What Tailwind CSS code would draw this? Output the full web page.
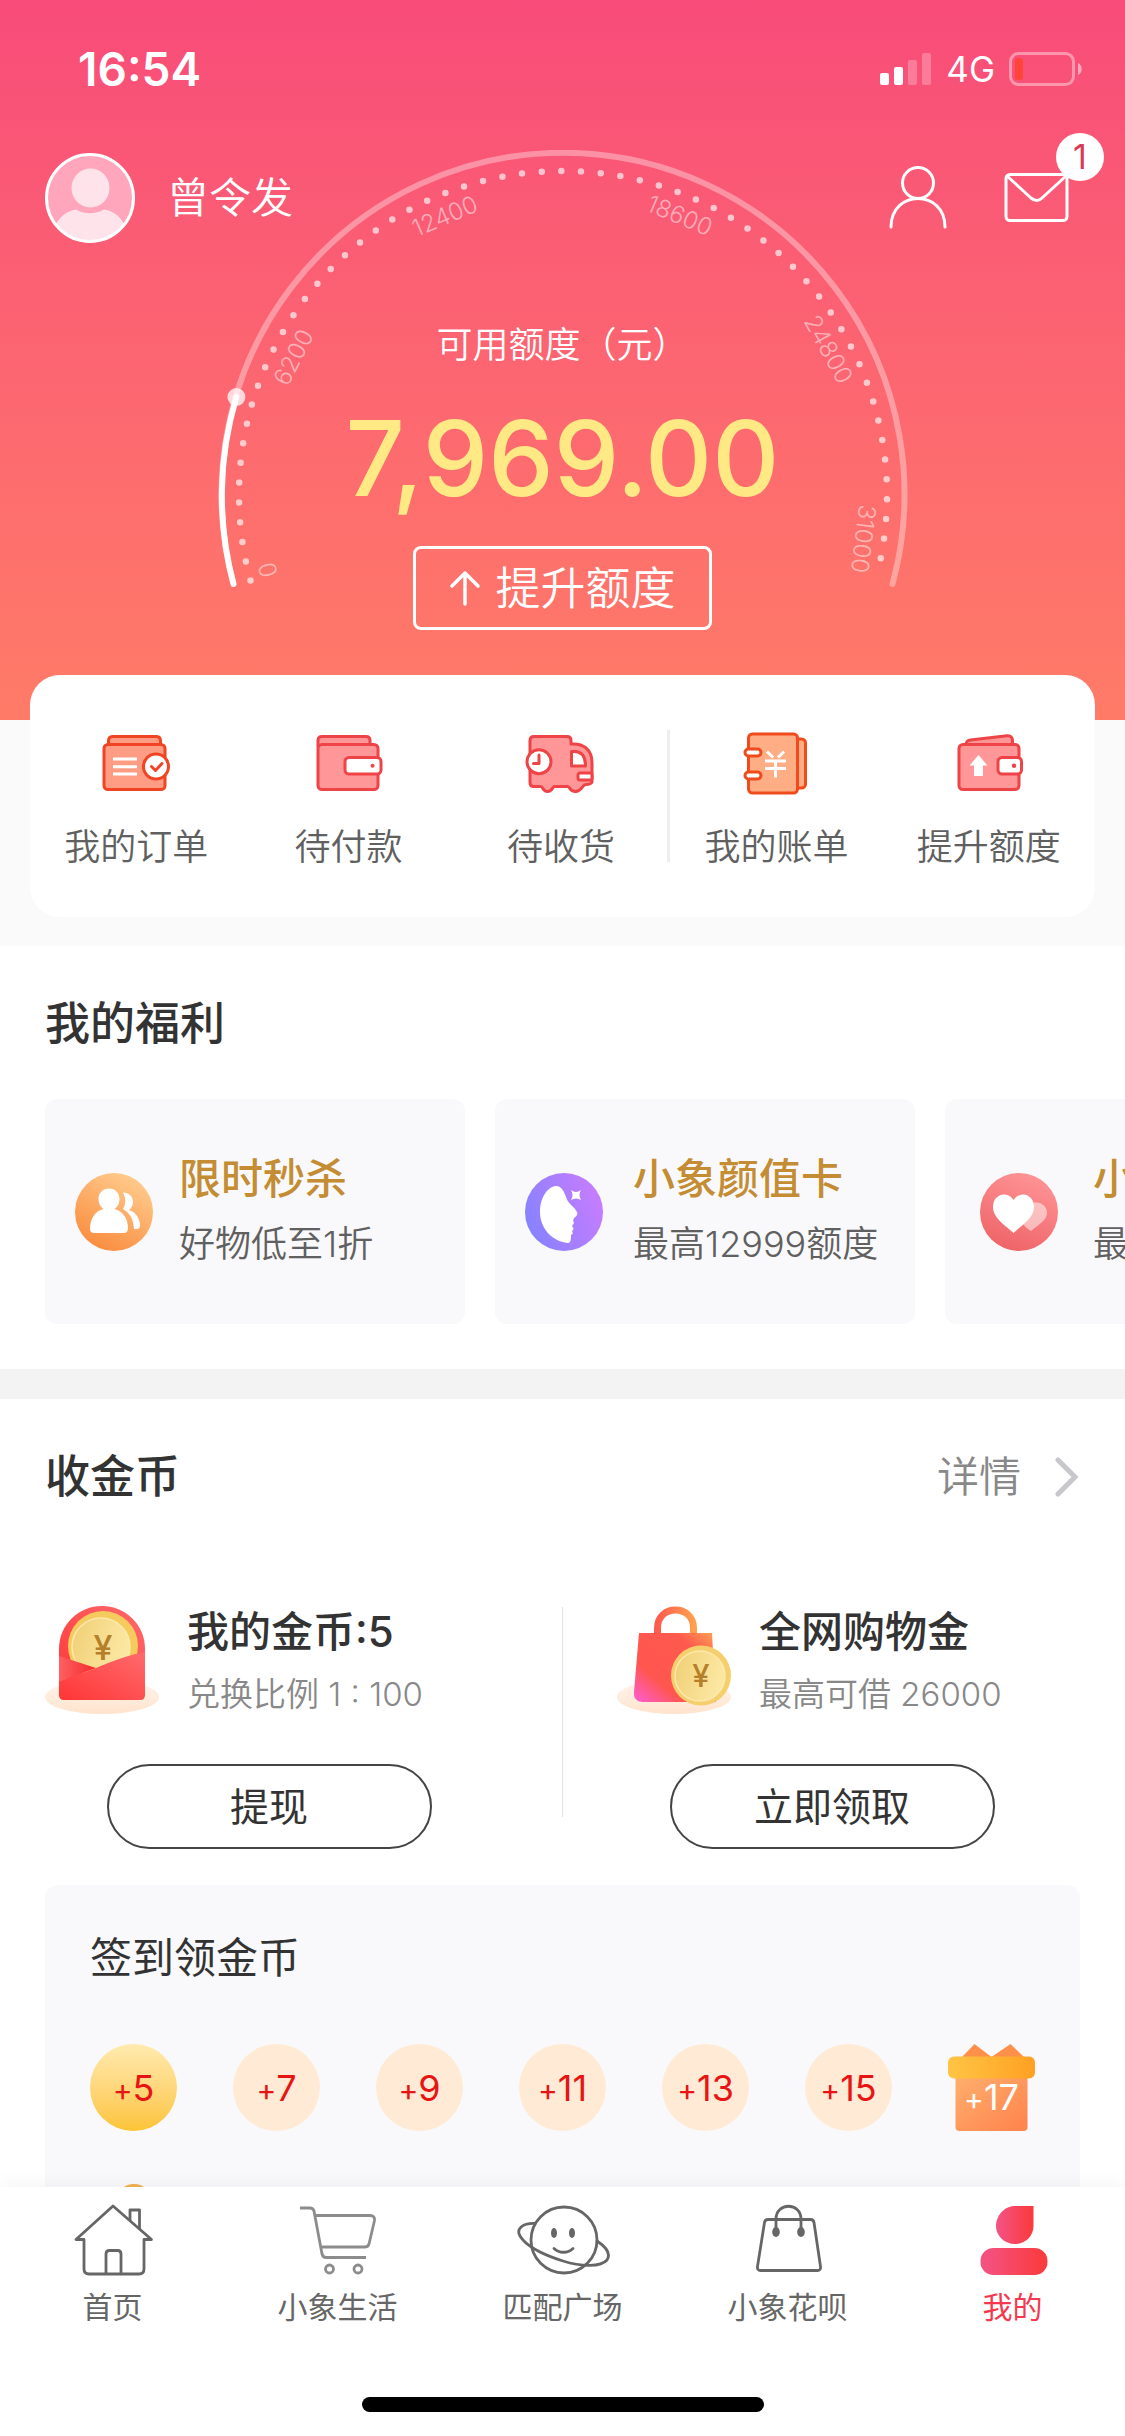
<!DOCTYPE html>
<html lang="zh-CN">
<head>
<meta charset="utf-8">
<meta name="viewport" content="width=device-width, initial-scale=1">
<title>我的</title>
<script src="https://cdn.jsdelivr.net/npm/@tailwindcss/browser@4"></script>
</head>
<body class="flex h-screen flex-col overflow-hidden bg-white font-['Inter','Noto_Sans_CJK_SC',sans-serif] text-[#333]">

<main class="min-h-0 flex-1 overflow-x-hidden overflow-y-auto [scrollbar-width:none]">

  <!-- Header with credit gauge -->
  <header class="bg-linear-to-b from-[#f84b79] to-[#ff7b67] pb-[90px] text-white">
    <div class="flex h-[138px] items-center justify-between pr-[42px] pl-[78px]">
      <span class="text-[46px] leading-none font-semibold">16:54</span>
      <div class="flex items-center gap-[14px]">
        <svg class="h-[34px] w-[52px]" viewBox="0 0 52 34" fill="#fff" aria-hidden="true">
          <rect x="0" y="21" width="9" height="12" rx="2"/><rect x="14" y="15" width="9" height="18" rx="2"/>
          <rect x="28" y="8" width="9" height="25" rx="2" opacity=".25"/><rect x="42" y="1" width="9" height="32" rx="2" opacity=".25"/>
        </svg>
        <span class="text-[35px] leading-none">4G</span>
        <svg class="h-[34px] w-[74px]" viewBox="0 0 74 34" aria-hidden="true">
          <rect x="1.500" y="1.500" width="63" height="31" rx="8" fill="none" stroke="#fff" stroke-opacity=".4" stroke-width="3"/>
          <rect x="6" y="6" width="8" height="22" rx="3" fill="#ff4539"/>
          <path d="M69 11c5 2 5 10 0 12z" fill="#fff" fill-opacity=".5"/>
        </svg>
      </div>
    </div>

    <div class="relative z-10 mt-[15px] flex h-[90px] items-center justify-between pr-[56px] pl-[45px]">
      <div class="flex items-center gap-[32px]">
        <svg class="size-[90px]" viewBox="0 0 90 90" role="img" aria-label="头像">
          <defs><clipPath id="avatar"><circle cx="45" cy="45" r="43"/></clipPath></defs>
          <circle cx="45" cy="45" r="43" fill="#ffa6bd"/>
          <g clip-path="url(#avatar)" fill="#fee4ea"><ellipse cx="45.500" cy="35" rx="19" ry="19.500"/><path d="M9 76C13 64 22 58 31 56.500c9 5 19 5 28 0C69 58 77 64 81 76v14H9z"/></g>
          <circle cx="45" cy="45" r="43.500" fill="none" stroke="#fff" stroke-width="3"/>
        </svg>
        <span class="text-[42px] leading-none font-[350]">曾令发</span>
      </div>
      <div class="flex items-center gap-[55px]">
        <a href="#profile" aria-label="个人资料">
          <svg class="h-[66px] w-[60px]" viewBox="0 0 60 66" fill="none" stroke="#fff" stroke-width="3" stroke-linecap="round"><circle cx="30" cy="18" r="15.500"/><path d="M3 62C3 24 57 24 57 62"/></svg>
        </a>
        <a href="#messages" aria-label="消息" class="relative">
          <svg class="h-[54px] w-[66px]" viewBox="0 0 66 54" fill="none" stroke="#fff" stroke-width="3" stroke-linejoin="round"><rect x="3" y="3.500" width="61" height="46" rx="4"/><path d="M4 5l24 22q6 5 11 0L63 5"/></svg>
          <span class="absolute -top-[38px] -right-[35px] flex size-12 items-center justify-center rounded-full bg-white text-[34px] leading-none text-[#d93a55]">1</span>
        </a>
      </div>
    </div>

    <div class="-mt-[93px] grid justify-items-center">
      <svg class="h-[440px] w-[690px] [grid-area:1/1]" viewBox="0 0 690 440" fill="none" stroke-linecap="round" aria-hidden="true">
        <path d="M15.500 434A341.500 341.500 0 1 1 674.500 434" stroke="#fff" stroke-opacity=".35" stroke-width="6"/>
        <path d="M32.500 430.500A324 324 0 1 1 658.700 426" stroke="#fff" stroke-opacity=".65" stroke-width="6.500" stroke-dasharray="0 19.790"/>
        <circle cx="18.400" cy="247" r="9" fill="#fff" fill-opacity=".75"/>
        <path d="M15.500 434A341.500 341.500 0 0 1 18.400 247" stroke="#fff" stroke-width="6"/>
        <g fill="#fff" fill-opacity=".5" font-size="24" font-weight="300" text-anchor="middle">
          <text transform="translate(49.500 420) rotate(-104)" y="9">0</text>
          <text transform="translate(75 207) rotate(-63)" y="9">6200</text>
          <text transform="translate(226.500 65.500) rotate(-23)" y="9">12400</text>
          <text transform="translate(462 65) rotate(23)" y="9">18600</text>
          <text transform="translate(611 199) rotate(61)" y="9">24800</text>
          <text transform="translate(646 389) rotate(97)" y="9">31000</text>
        </g>
      </svg>
      <div class="flex flex-col items-center pt-[168px] [grid-area:1/1]">
        <p class="text-[36px] leading-[54px] font-[350]">可用额度（元）</p>
        <p class="mt-[26px] text-[104px] leading-[120px] font-medium text-[#ffe985]">7,969.00</p>
        <button type="button" class="mt-7 flex h-21 items-center gap-[14px] rounded-lg border-3 border-white px-[33px] text-[45px] leading-none font-[350]">
          <svg class="h-9 w-8" viewBox="0 0 32 36" fill="none" stroke="#fff" stroke-width="3.500" stroke-linecap="round" stroke-linejoin="round" aria-hidden="true"><path d="M16 34V3M3 16L16 3l13 13"/></svg>
          提升额度
        </button>
      </div>
    </div>
  </header>

  <!-- Shortcuts -->
  <nav class="flex flex-col bg-[#fafafa] px-[30px] pb-[29px]" aria-label="快捷入口">
    <div class="relative -mt-[45px] flex h-[242px] items-start rounded-[30px] bg-white pt-[52px] text-[36px] leading-[54px] font-[350] text-[#606060]">
      <a href="#orders" class="flex flex-1 flex-col items-center gap-[21px] whitespace-nowrap">
        <svg class="size-[72px]" viewBox="0 0 72 72" fill="#ff9c84" stroke="#f04423" stroke-width="3" stroke-linejoin="round"><path d="M8.500 17v-3q0-4.500 4-4.500h44q4 0 4 4.500v3"/><rect x="4" y="17.500" width="61" height="45" rx="4"/><circle cx="56" cy="39.500" r="12.500" fill="#fff"/><path d="M13 32h24M13 39.700h24M13 47h24" stroke="#fff"/><path d="M51.500 39.500l4 4 6.500-7" fill="none" stroke-linecap="round"/></svg>
        我的订单
      </a>
      <a href="#unpaid" class="flex flex-1 flex-col items-center gap-[21px] whitespace-nowrap">
        <svg class="size-[72px]" viewBox="0 0 72 72" fill="#ff9799" stroke="#ee4347" stroke-width="3" stroke-linejoin="round"><path d="M5 20v-6.500q0-4 4-4h44q4 0 4 4V20"/><rect x="5" y="17.500" width="60" height="45" rx="4"/><rect x="32" y="30.500" width="36" height="16.500" rx="4" fill="#fff"/><circle cx="59.500" cy="38.700" r="2" fill="#ee4347" stroke="none"/></svg>
        待付款
      </a>
      <a href="#shipping" class="flex flex-1 flex-col items-center gap-[21px] whitespace-nowrap">
        <svg class="size-[72px]" viewBox="0 0 72 72" fill="#ff9799" stroke="#ee4347" stroke-width="3" stroke-linejoin="round"><path d="M5 13.500q0-4 4-4h33q4 0 4 4V17c12-1 21 5 21 19v19q-1 2.500-6 2.500c-4 0-4 7-10.500 7s-5-5-8-5H29.500c-2 0-2 5-7 5s-4-5-7-5H9q-4 0-4-4z"/><circle cx="14" cy="34.700" r="12" fill="#fff"/><path d="M14 28v8.500H8.500" fill="none" stroke-linecap="round"/><path d="M46.500 24.500h3c8 0 11 6 11 14.500h-14z" fill="#fff"/><rect x="53" y="46" width="14" height="7" rx="2" fill="#fff"/></svg>
        待收货
      </a>
      <span class="mt-[3px] h-33 w-[3px] bg-[#eee]"></span>
      <a href="#bills" class="flex flex-1 flex-col items-center gap-[21px] whitespace-nowrap">
        <svg class="size-[72px]" viewBox="0 0 72 72" fill="#ffad85" stroke="#f04b1c" stroke-width="3" stroke-linejoin="round"><rect x="40" y="12" width="25.500" height="49" rx="4"/><rect x="8.500" y="7" width="49" height="59" rx="4"/><rect x="5" y="22" width="16" height="7" rx="3.500" fill="#fff"/><rect x="5" y="45" width="16" height="7" rx="3.500" fill="#fff"/><path d="M27 24.500l6 6M44 24.500l-6 6M25 34h21M25 41.500h21M35.500 34v16.500" fill="none" stroke="#fff"/></svg>
        我的账单
      </a>
      <a href="#raise" class="flex flex-1 flex-col items-center gap-[21px] whitespace-nowrap">
        <svg class="size-[72px]" viewBox="0 0 72 72" fill="#ff9799" stroke="#ee4347" stroke-width="3" stroke-linejoin="round"><path d="M13.500 18c-1-3 1-4.500 4-5L54 8.800c4-.5 5.500 2 5.500 5V18"/><rect x="6" y="17.500" width="60" height="45" rx="4"/><rect x="45" y="30.500" width="23.500" height="16.500" rx="4" fill="#fff"/><circle cx="61" cy="38.700" r="2.200" fill="#ee4347" stroke="none"/><path d="M25.500 28l9 10.500H30V49h-9V38.500h-4.500z" fill="#fff" stroke="none"/></svg>
        提升额度
      </a>
    </div>
  </nav>

  <!-- Benefits -->
  <section class="overflow-hidden pt-[44px] pb-[45px] pl-[45px]">
    <h2 class="text-[45px] leading-[68px] font-medium">我的福利</h2>
    <div class="mt-[41px] flex gap-[30px] whitespace-nowrap">
      <a href="#flash" class="flex h-[225px] w-[420px] shrink-0 items-center gap-[26px] rounded-xl bg-[#f9f9fb] px-[30px]">
        <svg class="size-[78px] shrink-0" viewBox="0 0 78 78" aria-hidden="true"><defs><linearGradient id="gOrange" x1=".8" y1=".1" x2=".3" y2="1"><stop stop-color="#ffc98a"/><stop offset="1" stop-color="#fa8c3e"/></linearGradient></defs><circle cx="39" cy="39" r="39" fill="url(#gOrange)"/><g fill="#fff"><path d="M34 15.500c6.500 0 10.500 5 10.500 10.500 0 4.500-2 8-5 10C48 38 53 46 53 55q0 5-4 5H19q-4 0-4-4c0-10 5-18 13.500-20-3-2-5-5.500-5-10C23.500 20.500 27.500 15.500 34 15.500z"/><path d="M48 19.500c6 0 10 4 10 9 0 4-2 7-4 8.500C61 39 65 46 65 52q0 4-3 4h-3c-1-10-3-15-11-20 3-5 3-11 0-16.500z"/></g></svg>
        <span class="flex flex-col gap-2 pb-[3px]">
          <strong class="text-[42px] leading-[60px] font-medium text-[#c48c33]">限时秒杀</strong>
          <span class="text-[36px] leading-[54px] font-[350] text-[#606060]">好物低至1折</span>
        </span>
      </a>
      <a href="#beauty" class="flex h-[225px] w-[420px] shrink-0 items-center gap-[30px] rounded-xl bg-[#f9f9fb] px-[30px]">
        <svg class="size-[78px] shrink-0" viewBox="0 0 78 78" aria-hidden="true"><defs><linearGradient id="gPurple" x1="0" y1=".7" x2="1" y2=".3"><stop stop-color="#8582ff"/><stop offset="1" stop-color="#c97cff"/></linearGradient></defs><circle cx="39" cy="39" r="39" fill="url(#gPurple)"/><path d="M31 13c-9 1-16 12-16 26 0 16 12 30 29 31 2-2 2-4 2-8 2-1 2-2 1-4 2-1 2-3 0-5l2-3c-1-2-1-3 0-5 3-2 4-4 3-6-3-6-9-8-11-15C39 19 37 13 31 13z" fill="#fff"/><path d="M46 17c3.500 2.500 6.500 2.500 10 0-2 3.500-2 6.500 0 10-3.500-2-6.500-2-10 0 2-3.500 2-6.500 0-10z" fill="#fff"/></svg>
        <span class="flex flex-col gap-2 pb-[3px]">
          <strong class="text-[42px] leading-[60px] font-medium text-[#c48c33]">小象颜值卡</strong>
          <span class="text-[36px] leading-[54px] font-[350] text-[#606060]">最高12999额度</span>
        </span>
      </a>
      <a href="#love" class="flex h-[225px] w-[420px] shrink-0 items-center gap-[35px] rounded-xl bg-[#f9f9fb] px-[35px]">
        <svg class="size-[78px] shrink-0" viewBox="0 0 78 78" aria-hidden="true"><defs><linearGradient id="gRed" x1=".7" y1="0" x2=".3" y2="1"><stop stop-color="#ff9496"/><stop offset="1" stop-color="#ee6367"/></linearGradient></defs><circle cx="39" cy="39" r="39" fill="url(#gRed)"/><path d="M50 30c6-2 17 0 17 10 0 7-9 12-16 18-3-2-6-4-8-7z" fill="#fff" fill-opacity=".5"/><path d="M33.500 60C25 52 13 45 13 34c0-13 14-17 20.500-7C40 17 54 21 54 34c0 11-12 18-20.500 26z" fill="#fff"/></svg>
        <span class="flex flex-col gap-2 pb-[3px]">
          <strong class="text-[42px] leading-[60px] font-medium text-[#c48c33]">小象桃花运</strong>
          <span class="text-[36px] leading-[54px] font-[350] text-[#606060]">最高9999额度</span>
        </span>
      </a>
    </div>
  </section>

  <div class="h-[30px] bg-[#f3f3f3]"></div>

  <!-- Coins -->
  <section class="pt-[44px]">
    <div class="flex items-center justify-between pr-[46px] pl-[45px]">
      <h2 class="text-[45px] leading-[68px] font-medium">收金币</h2>
      <a href="#detail" class="flex items-center gap-[34px] text-[42px] leading-[60px] font-[350] text-[#888]">详情
        <svg class="h-10 w-6" viewBox="0 0 24 40" fill="none" stroke="#c7c7cc" stroke-width="5" stroke-linecap="round" aria-hidden="true"><path d="M3 3l17 17L3 37"/></svg>
      </a>
    </div>

    <div class="mt-[91px] flex">
      <div class="flex flex-1 flex-col items-center gap-[46px] pr-6">
        <div class="flex items-center gap-[28px] self-stretch pl-[45px]">
          <svg class="h-[108px] w-[114px]" viewBox="0 0 114 108" aria-hidden="true">
            <defs>
              <linearGradient id="shade" x1="0" y1="0" x2="0" y2="1"><stop stop-color="#fff5ec"/><stop offset="1" stop-color="#ffe3cd"/></linearGradient>
              <linearGradient id="env" x1="0" y1="1" x2="1" y2="0"><stop stop-color="#ff3535"/><stop offset="1" stop-color="#ff6b6e"/></linearGradient>
              <linearGradient id="coin" x1="0" y1="0" x2="1" y2=".3"><stop stop-color="#f0cf75"/><stop offset="1" stop-color="#fce7a2"/></linearGradient>
              <linearGradient id="flap" x1="0" y1="0" x2="1" y2="0"><stop stop-color="#ff6062"/><stop offset="1" stop-color="#f22a2c"/></linearGradient>
            </defs>
            <ellipse cx="57" cy="91" rx="57" ry="17" fill="url(#shade)"/>
            <path d="M14 90V43C14 18 34 0 57 0s43 18 43 43v47z" fill="url(#env)"/>
            <circle cx="58" cy="40" r="35" fill="#f5cb5d"/><circle cx="56" cy="41" r="29" fill="url(#coin)" stroke="#fbe9ad" stroke-width="1.500"/>
            <text x="58" y="54" font-size="34" font-weight="500" text-anchor="middle" fill="#b5802b">¥</text>
            <path d="M14 50l37 12-37 14z" fill="url(#flap)"/>
            <path d="M14 76l37-14c16-7 33-13 49-16v43q0 5-5 5H19q-5 0-5-5z" fill="url(#env)"/>
          </svg>
          <div class="flex flex-col gap-2">
            <h3 class="text-[42px] leading-[60px] font-medium">我的金币:5</h3>
            <p class="text-[33px] leading-[48px] font-[350] text-[#888]">兑换比例 1 : 100</p>
          </div>
        </div>
        <button type="button" class="h-[85px] w-[325px] rounded-full border-2 border-[#444] text-[39px] leading-none">提现</button>
      </div>
      <span class="mt-[5px] h-[210px] w-px bg-[#e5e5e5]"></span>
      <div class="flex flex-1 flex-col items-center gap-[46px] pr-6">
        <div class="flex items-center gap-[28px] self-stretch pl-[54px]">
          <svg class="h-[108px] w-[114px]" viewBox="0 0 114 108" aria-hidden="true">
            <defs>
              <linearGradient id="bag" x1="0" y1="1" x2="1" y2="0"><stop offset=".05" stop-color="#ff5cc0"/><stop offset=".3" stop-color="#ff5650"/><stop offset=".75" stop-color="#ff5a4e"/><stop offset="1" stop-color="#ffa552"/></linearGradient>
              <linearGradient id="handle" x1="0" y1="0" x2="1" y2="0"><stop stop-color="#ff5a4e"/><stop offset="1" stop-color="#ffa04f"/></linearGradient>
            </defs>
            <ellipse cx="57" cy="91" rx="57" ry="17" fill="url(#shade)"/>
            <path d="M40.500 30v-8c0-24 36-24 36 0v8" fill="none" stroke="url(#handle)" stroke-width="7"/>
            <path d="M22 27h73l4 69H25q-9-1-8-10z" fill="url(#bag)"/>
            <circle cx="84" cy="69.500" r="30" fill="#f5cf6c"/><circle cx="83" cy="70" r="25" fill="url(#coin)" stroke="#fbe9ad" stroke-width="1.500"/>
            <text x="84" y="81" font-size="31" font-weight="500" text-anchor="middle" fill="#b5802b">¥</text>
          </svg>
          <div class="flex flex-col gap-2">
            <h3 class="text-[42px] leading-[60px] font-medium">全网购物金</h3>
            <p class="text-[33px] leading-[48px] font-[350] text-[#888]">最高可借 26000</p>
          </div>
        </div>
        <button type="button" class="h-[85px] w-[325px] rounded-full border-2 border-[#444] text-[39px] leading-none">立即领取</button>
      </div>
    </div>

    <!-- Daily check-in -->
    <div class="mx-[45px] mt-9 rounded-xl bg-[#f9f9fb] px-[45px] pt-[42px] pb-[60px]">
      <h3 class="text-[42px] leading-[62px]">签到领金币</h3>
      <ol class="mt-[55px] flex justify-between text-[36px] leading-none text-[#e81414]">
        <li class="flex size-[87px] items-center justify-center rounded-full bg-linear-to-b from-[#ffeaae] to-[#fdc435]"><span><small class="text-[30px]">+</small>5</span></li>
        <li class="flex size-[87px] items-center justify-center rounded-full bg-[#ffebd5]"><span><small class="text-[30px]">+</small>7</span></li>
        <li class="flex size-[87px] items-center justify-center rounded-full bg-[#ffebd5]"><span><small class="text-[30px]">+</small>9</span></li>
        <li class="flex size-[87px] items-center justify-center rounded-full bg-[#ffebd5]"><span><small class="text-[30px]">+</small>11</span></li>
        <li class="flex size-[87px] items-center justify-center rounded-full bg-[#ffebd5]"><span><small class="text-[30px]">+</small>13</span></li>
        <li class="flex size-[87px] items-center justify-center rounded-full bg-[#ffebd5]"><span><small class="text-[30px]">+</small>15</span></li>
        <li class="grid size-[87px] place-items-center">
          <svg class="size-[87px] [grid-area:1/1]" viewBox="0 0 87 87" aria-hidden="true">
            <defs>
              <linearGradient id="giftBox" x1="0" y1="0" x2="1" y2="1"><stop stop-color="#ffb06e"/><stop offset="1" stop-color="#ff824c"/></linearGradient>
              <linearGradient id="giftLid" x1="0" y1="0" x2="1" y2="0"><stop stop-color="#ffc544"/><stop offset="1" stop-color="#ffa022"/></linearGradient>
            </defs>
            <path d="M13 14L26.500 0 43.500 13 62.500 0 77 14z" fill="#ff9049"/>
            <path d="M7.500 30h72v53q0 4-4 4h-64q-4 0-4-4z" fill="url(#giftBox)"/>
            <rect y="12.500" width="87" height="22" rx="6" fill="url(#giftLid)"/>
          </svg>
          <span class="pt-[18px] text-white [grid-area:1/1]"><small class="text-[30px]">+</small>17</span>
        </li>
      </ol>
      <div class="mt-[53px] flex w-[87px] justify-center"><span class="size-9 rounded-full bg-[#f2b04e]"></span></div>
    </div>
  </section>
</main>

<!-- Tab bar -->
<nav class="relative z-10 flex flex-col items-center bg-white pt-[17px] pb-6 shadow-[0_-4px_16px_rgba(0,0,0,0.04)]" aria-label="主导航">
  <div class="flex w-full text-[30px] leading-10 text-[#666]">
    <a href="#home" class="flex flex-1 flex-col items-center gap-[11px]">
      <svg class="h-[72px] w-24" viewBox="0 0 96 72" fill="none" stroke="#666" stroke-width="2.800" stroke-linejoin="round"><path d="M48 2L11 35.500h8V65q0 5 5 5h50q5 0 5-5V35.500h7.500z"/><path d="M65 17V6h9.500v19"/><path d="M41 69V50q0-3.500 3.500-3.500h8q3.500 0 3.500 3.500v19"/></svg>
      首页
    </a>
    <a href="#life" class="flex flex-1 flex-col items-center gap-[11px]">
      <svg class="h-[72px] w-24" viewBox="0 0 96 72" fill="none" stroke="#8c8c8c" stroke-width="2.800" stroke-linejoin="round"><path d="M10 4h10q3 0 4 3l8 43q1 3.500 4 3.500h40"/><path d="M26 11.500h54q5 0 4.500 5L79 40q-1 3-4 3H31.500"/><circle cx="39.500" cy="65" r="4"/><circle cx="68" cy="65" r="4"/></svg>
      小象生活
    </a>
    <a href="#square" class="flex flex-1 flex-col items-center gap-[11px]">
      <svg class="h-[72px] w-24" viewBox="0 0 96 72" fill="none" stroke="#666" stroke-width="2.800" stroke-linecap="round"><circle cx="49" cy="36" r="33"/><path d="M20 19.500C7 19 1 25 5 32c6 10 24 19 43 25s38 6 44-1c4-6-1-13-10-19"/><path d="M39 44.500c5 5 14 5 19 0"/><ellipse cx="39" cy="29" rx="3" ry="5" fill="#666" stroke="none"/><ellipse cx="57" cy="29" rx="3" ry="5" fill="#666" stroke="none"/></svg>
      匹配广场
    </a>
    <a href="#huabei" class="flex flex-1 flex-col items-center gap-[11px]">
      <svg class="h-[72px] w-24" viewBox="0 0 96 72" fill="none" stroke="#666" stroke-width="2.800" stroke-linejoin="round"><path d="M28 15.500h42.500q3 0 3.500 3l6.500 44q.5 4-3 4h-57q-3.500 0-3-4l7-44q.5-3 3.500-3z"/><path d="M36 26V15c0-17 25-17 25 0v11"/><ellipse cx="36" cy="28" rx="3.800" ry="5" fill="#666" stroke="none"/><ellipse cx="61" cy="28" rx="3.800" ry="5" fill="#666" stroke="none"/></svg>
      小象花呗
    </a>
    <a href="#me" aria-current="page" class="flex flex-1 flex-col items-center gap-[11px] text-[#f5384f]">
      <svg class="h-[72px] w-24" viewBox="0 0 96 72"><defs><linearGradient id="me" x1="0" y1="0" x2="1" y2="0"><stop offset=".1" stop-color="#f4517f"/><stop offset=".9" stop-color="#fa3c41"/></linearGradient></defs><path d="M50 2h18.500v20c0 10-8 18-18.500 18s-19-8-19-18S39 2 50 2z" fill="url(#me)"/><rect x="15.500" y="44" width="67" height="27" rx="13" fill="url(#me)"/></svg>
      我的
    </a>
  </div>
  <div class="mt-[70px] h-[15px] w-[402px] rounded-full bg-black"></div>
</nav>

</body>
</html>
